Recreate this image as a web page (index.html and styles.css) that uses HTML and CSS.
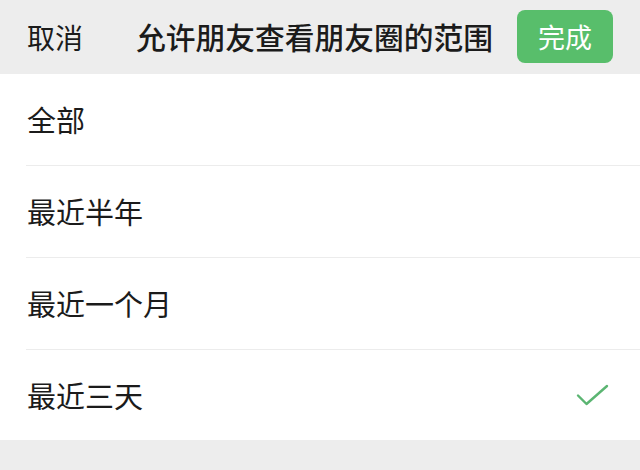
FILE: index.html
```html
<!DOCTYPE html>
<html lang="zh-CN">
<head>
<meta charset="utf-8">
<link rel="stylesheet" href="styles.css">
</head>
<body>
<div class="page">
  <header class="topbar">
    <span class="cancel">取消</span>
    <span class="title">允许朋友查看朋友圈的范围</span>
    <span class="done">完成</span>
  </header>
  <ul class="options">
    <li class="option">全部</li>
    <li class="option">最近半年</li>
    <li class="option">最近一个月</li>
    <li class="option selected">最近三天
      <svg class="check" width="34" height="24" viewBox="0 0 34 24"><path d="M2 11.5 L10.5 20 L31 2" fill="none" stroke="#5bb572" stroke-width="2.4" stroke-linecap="round" stroke-linejoin="round"/></svg>
    </li>
  </ul>
</div>
</body>
</html>
```
FILE: styles.css
```css
html, body {
  margin: 0;
  padding: 0;
}
body {
  background: #ededed;
  font-family: "Noto Sans CJK SC", "Noto Sans", sans-serif;
  color: #1b1b1b;
}
.page {
  width: 640px;
  height: 470px;
  background: #ededed;
}
.topbar {
  height: 74px;
  display: flex;
  align-items: center;
  padding: 0 27px 0 27px;
  box-sizing: border-box;
}
.cancel {
  font-size: 28px;
  line-height: 1;
  width: 56px;
  margin-right: 53px;
}
.title {
  font-size: 29.75px;
  font-weight: 500;
  line-height: 1;
  flex: 1;
  white-space: nowrap;
}
.done {
  width: 96px;
  height: 53px;
  margin-top: -1px;
  border-radius: 8px;
  background: #58be6b;
  color: #fff;
  font-size: 27px;
  display: flex;
  align-items: center;
  justify-content: center;
  line-height: 1;
}
.options {
  list-style: none;
  margin: 0;
  padding: 0 0 0 26px;
  background: #fff;
}
.option {
  height: 91px;
  display: flex;
  align-items: center;
  padding-left: 1px;
  padding-right: 30px;
  font-size: 29px;
  line-height: 1;
  border-bottom: 1px solid #ececec;
  justify-content: space-between;
}
.option:last-child {
  border-bottom: none;
  height: 90px;
}
.check {
  display: block;
  margin-top: 2px;
}
```
